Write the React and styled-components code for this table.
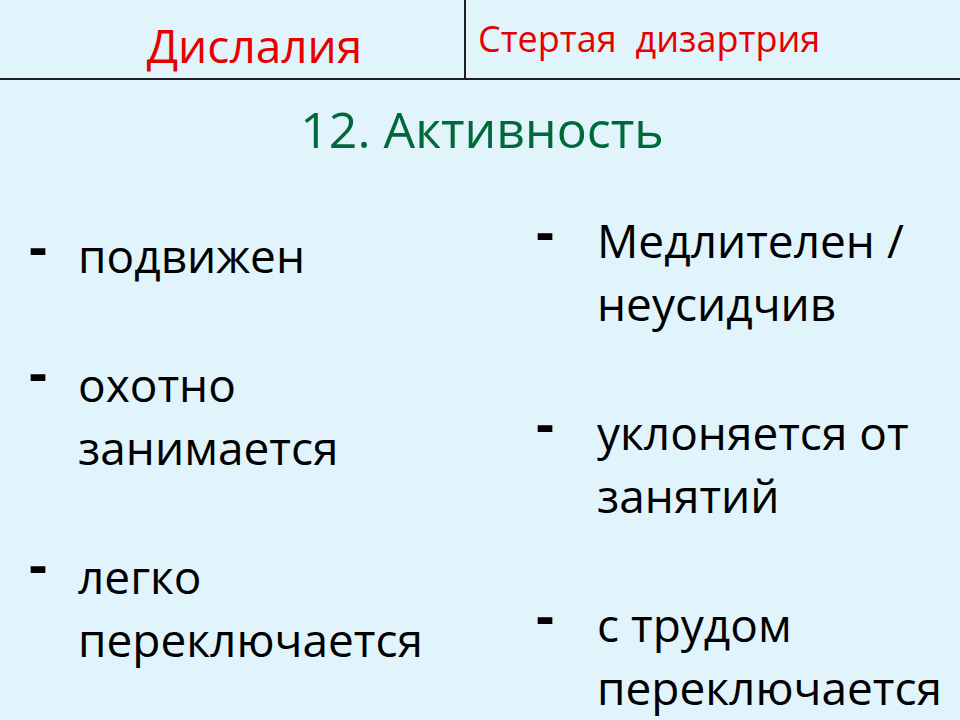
import React from "react";
import styled, { createGlobalStyle } from "styled-components";

const Global = createGlobalStyle`
  html, body { margin: 0; padding: 0; }
  body {
    background: #e1f3fb;
    font-family: "Open Sans", "Noto Sans", sans-serif;
    color: #000;
  }
`;

const Slide = styled.div`
  width: 960px;
  height: 720px;
  overflow: hidden;
  background: #e1f3fb;
  display: flex;
  flex-direction: column;
`;

const Header = styled.div`
  display: grid;
  grid-template-columns: 466px 1fr;
  height: 80px;
  box-sizing: border-box;
  border-bottom: 2px solid #1e1e1e;
`;

const HeaderCell = styled.div`
  box-sizing: border-box;
  color: #e60000;
  white-space: pre;
  ${(p) =>
    p.$main
      ? `
    border-right: 2px solid #1e1e1e;
    font-size: 46px;
    line-height: 60px;
    padding: 15px 0 0 45px;
    text-align: center;
  `
      : `
    font-size: 36px;
    line-height: 46px;
    padding: 16px 0 0 12px;
  `}
`;

const Title = styled.h1`
  margin: 16px 0 0;
  font-weight: 400;
  font-size: 50px;
  line-height: 66px;
  text-align: center;
  color: #00693a;
  padding-left: 4px;
`;

const Columns = styled.div`
  display: grid;
  grid-template-columns: 507px 1fr;
  padding-top: 47px;
`;

const List = styled.ul`
  list-style: none;
  margin: 0;
  padding: ${(p) => p.$top}px 0 0 ${(p) => p.$left}px;
  display: flex;
  flex-direction: column;
  gap: 66px;
`;

const Item = styled.li`
  display: grid;
  grid-template-columns: ${(p) => p.$bullet}px 1fr;
  font-size: 46px;
  line-height: 63px;
`;

const Bullet = styled.span`
  display: block;
  font-weight: 700;
  font-size: 56px;
  line-height: 36px;
  height: 36px;
  margin-top: ${(p) => p.$shift || 0}px;
  margin-left: -1px;
`;

const left = ["подвижен", "охотно\nзанимается", "легко\nпереключается"];
const right = [
  "Медлителен /\nнеусидчив",
  "уклоняется от\nзанятий",
  "с трудом\nпереключается",
];

const Text = styled.span`
  white-space: pre-line;
`;

export default function App() {
  return (
    <Slide>
      <Global />
      <Header>
        <HeaderCell $main>Дислалия</HeaderCell>
        <HeaderCell>Стертая  дизартрия</HeaderCell>
      </Header>
      <Title>12. Активность</Title>
      <Columns>
        <List $top={15} $left={30}>
          {left.map((t, i) => (
            <Item key={t} $bullet={48}>
              <Bullet $shift={i === 0 ? 3 : 0}>-</Bullet>
              <Text>{t}</Text>
            </Item>
          ))}
        </List>
        <List $top={0} $left={30}>
          {right.map((t) => (
            <Item key={t} $bullet={60}>
              <Bullet $shift={3}>-</Bullet>
              <Text>{t}</Text>
            </Item>
          ))}
        </List>
      </Columns>
    </Slide>
  );
}
